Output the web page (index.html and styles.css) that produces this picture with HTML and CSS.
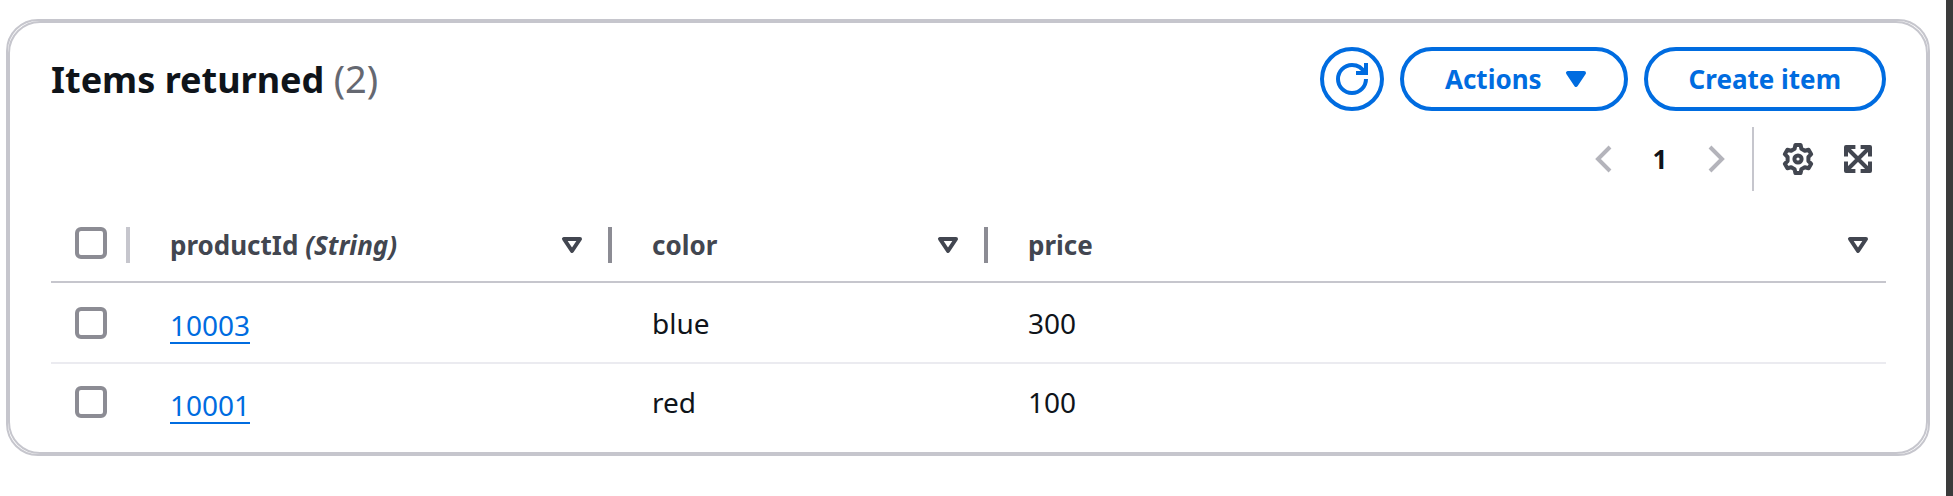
FILE: index.html
```html
<!DOCTYPE html>
<html lang="en">
<head>
<meta charset="utf-8">
<meta name="viewport" content="width=device-width, initial-scale=1">
<title>Items returned</title>
<link rel="stylesheet" href="styles.css">
</head>
<body>
<main class="panel">
  <div class="panel-body">
  <header class="panel-header">
    <h2 class="title">Items returned <span class="count">(2)</span></h2>
    <div class="buttons">
      <button class="button button-icon" type="button" aria-label="Refresh">
        <svg class="icon" viewBox="0 0 16 16" aria-hidden="true"><path d="M15 8c0 3.87-3.13 7-7 7s-7-3.13-7-7 3.13-7 7-7c2.790 0 5.200 1.630 6.330 4M15 0v5h-5"/></svg>
      </button>
      <button class="button button-menu" type="button">Actions
        <svg class="icon caret" viewBox="0 0 16 16" aria-hidden="true"><path d="M4 5h8l-4 6-4-6z"/></svg>
      </button>
      <button class="button" type="button">Create item</button>
    </div>
  </header>
  <div class="tools">
    <nav class="pages" aria-label="Pagination">
      <button class="tool muted" type="button" aria-label="Previous page" disabled>
        <svg class="icon" viewBox="0 0 16 16" aria-hidden="true"><path d="M11 2L5 8l6 6"/></svg>
      </button>
      <button class="tool page" type="button" aria-current="page">1</button>
      <button class="tool muted" type="button" aria-label="Next page" disabled>
        <svg class="icon" viewBox="0 0 16 16" aria-hidden="true"><path d="M5 2l6 6-6 6"/></svg>
      </button>
    </nav>
    <div class="settings">
      <button class="tool" type="button" aria-label="Preferences">
        <svg class="icon round" viewBox="0 0 16 16" aria-hidden="true"><path d="M6.700 1h2.600l.4 1.900 1.700 1 1.900-.5 1.300 2.200-1.400 1.400v2l1.400 1.400-1.300 2.200-1.900-.5-1.700 1-.4 1.900H6.700l-.4-1.900-1.700-1-1.900.5-1.300-2.200L2.800 9V7L1.400 5.600l1.300-2.200 1.900.5 1.700-1z"/><circle cx="8" cy="8" r="1.800"/></svg>
      </button>
      <button class="tool" type="button" aria-label="Expand">
        <svg class="icon round" viewBox="0 0 16 16" aria-hidden="true"><path d="M9.300 2H14v4.700M2 6.700V2h4.700M14 9.300V14H9.300M6.700 14H2V9.300M2 2l12 12M14 2L2 14"/></svg>
      </button>
    </div>
  </div>
  <table class="table">
    <colgroup><col class="col-check"><col class="col-id"><col class="col-color"><col></colgroup>
    <thead>
      <tr>
        <th scope="col"><div class="head light"><input class="check" type="checkbox" aria-label="Select all items"></div></th>
        <th scope="col"><div class="head"><span>productId <em>(String)</em></span><svg class="icon sort" viewBox="0 0 16 16" aria-hidden="true"><path d="M4 5h8l-4 6-4-6z"/></svg></div></th>
        <th scope="col"><div class="head"><span>color</span><svg class="icon sort" viewBox="0 0 16 16" aria-hidden="true"><path d="M4 5h8l-4 6-4-6z"/></svg></div></th>
        <th scope="col"><div class="head last"><span>price</span><svg class="icon sort" viewBox="0 0 16 16" aria-hidden="true"><path d="M4 5h8l-4 6-4-6z"/></svg></div></th>
      </tr>
    </thead>
    <tbody>
      <tr>
        <td><input class="check" type="checkbox" aria-label="Select 10003"></td>
        <td><a class="link" href="#10003">10003</a></td>
        <td>blue</td>
        <td>300</td>
      </tr>
      <tr>
        <td><input class="check" type="checkbox" aria-label="Select 10001"></td>
        <td><a class="link" href="#10001">10001</a></td>
        <td>red</td>
        <td>100</td>
      </tr>
    </tbody>
  </table>
  </div>
</main>
</body>
</html>
```

FILE: styles.css
```css
* {
  box-sizing: border-box;
}

body {
  min-height: 100vh;
  margin: 0;
  padding: 19px 16px 40px 6px;
  border-right: 7px solid #3b3b3b;
  background: #fff;
  color: #0f141a;
  font-family: "Noto Sans", "Open Sans", sans-serif;
  font-size: 28px;
  line-height: 40px;
}

.panel,
.panel-body {
  border: 2px solid #c6c6cd;
  border-radius: 32px;
}

.panel-body {
  padding: 24px 40px 12px 41px;
}

.panel-header {
  display: flex;
  justify-content: space-between;
  align-items: center;
}

.title {
  margin: 0;
  font-size: 36px;
  line-height: 48px;
  font-weight: 700;
}

.count {
  color: #656871;
  font-size: 38px;
  font-weight: 400;
}

.buttons {
  display: flex;
  gap: 16px;
}

.button {
  display: flex;
  align-items: center;
  gap: 18px;
  height: 64px;
  padding: 0 41px;
  border: 4px solid #006ce0;
  border-radius: 32px;
  background: #fff;
  color: #006ce0;
  font: inherit;
  font-size: 26px;
  font-weight: 700;
}

.button-icon {
  justify-content: center;
  width: 64px;
  padding: 0;
}

.button-menu {
  padding-right: 32px;
}

.icon {
  flex: none;
  width: 32px;
  height: 32px;
  fill: none;
  stroke: currentColor;
  stroke-width: 2;
}

.round,
.caret,
.sort {
  stroke-linejoin: round;
}

.caret {
  fill: currentColor;
}

.tools {
  display: flex;
  justify-content: flex-end;
  margin-top: 16px;
}

.pages,
.settings {
  display: flex;
  align-items: center;
}

.pages {
  gap: 8px;
  padding-right: 12px;
}

.settings {
  gap: 12px;
  height: 64px;
  padding: 0 4px 0 20px;
  border-left: 2px solid #c6c6cd;
}

.tool {
  display: flex;
  justify-content: center;
  align-items: center;
  width: 48px;
  height: 48px;
  padding: 0;
  border: 0;
  background: none;
  color: #424650;
  font: inherit;
}

.muted {
  color: #b4b4bb;
}

.page {
  color: #0f141a;
  font-size: 26px;
  font-weight: 700;
}

.table {
  width: 100%;
  border-collapse: separate;
  border-spacing: 0;
  table-layout: fixed;
}

.col-check {
  width: 79px;
}

.col-id {
  width: 482px;
}

.col-color {
  width: 376px;
}

.table th,
.table td {
  padding: 0 0 0 40px;
  text-align: left;
}

.table th {
  height: 92px;
  padding-top: 18px;
  padding-bottom: 18px;
  border-bottom: 2px solid #c6c6cd;
  color: #424650;
  font-size: 26px;
  vertical-align: bottom;
}

.table td {
  height: 76px;
}

.table tbody tr:first-child td {
  height: 81px;
  border-bottom: 2px solid #ebebf0;
}

.table th:first-child,
.table td:first-child {
  padding-left: 24px;
}

.head {
  display: flex;
  justify-content: space-between;
  align-items: center;
  height: 36px;
  padding-right: 20px;
  border-right: 4px solid #8c8c94;
}

.light {
  align-items: flex-start;
  padding-right: 0;
  border-color: #c6c6cd;
}

.last {
  padding-right: 12px;
  border-right: 0;
}

.check {
  display: block;
  flex: none;
  width: 32px;
  height: 32px;
  margin: 0;
  border: 4px solid #8c8c94;
  border-radius: 6px;
  background: #fff;
  appearance: none;
}

.link {
  display: inline-block;
  margin-top: 8px;
  border-bottom: 2px solid #006ce0;
  color: #006ce0;
  line-height: 34px;
  text-decoration: none;
}
```
